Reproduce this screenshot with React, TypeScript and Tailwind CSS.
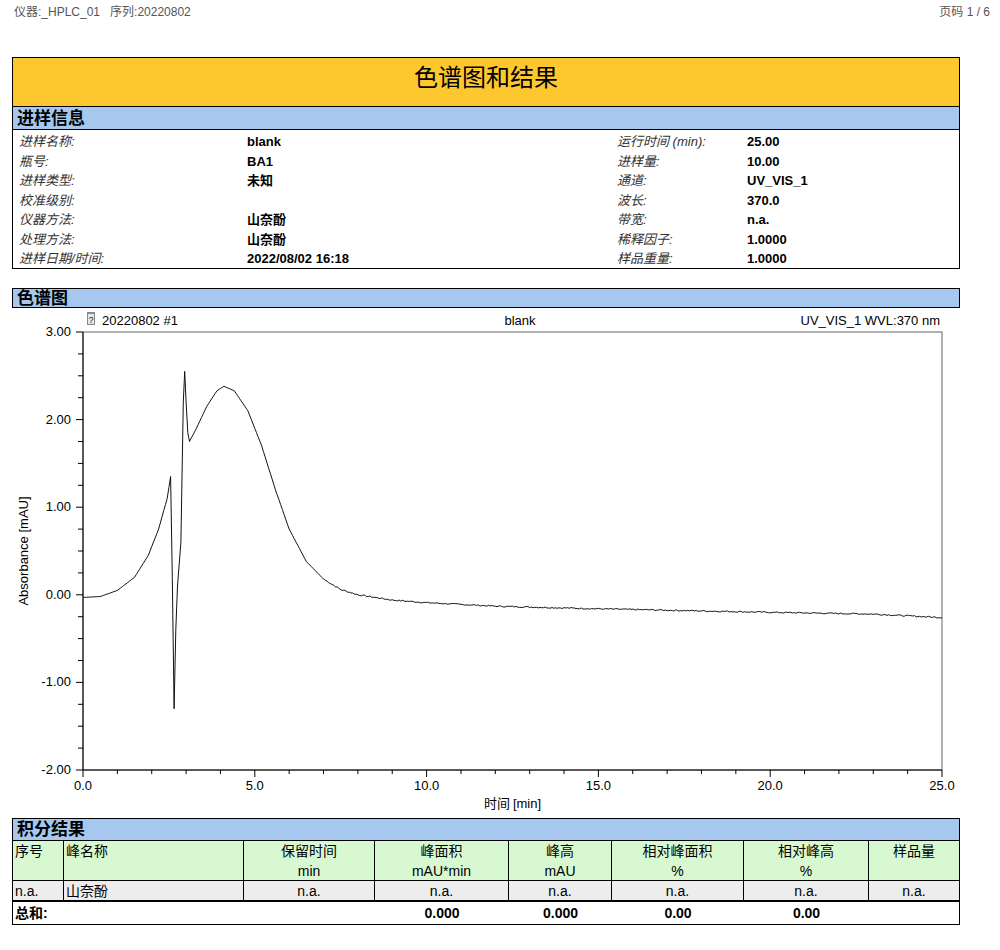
import React from "react";

const X0 = 71, PX = 34.36, YT = 24, PY = 87.6;
const mx = (t: number) => X0 + t * PX;
const my = (v: number) => YT + (3 - v) * PY;

function curvePts() {
  const key: [number, number][] = [
    [0, -0.03], [0.5, -0.02], [1.0, 0.05], [1.5, 0.2], [1.9, 0.45], [2.2, 0.75], [2.45, 1.1], [2.55, 1.35],
    [2.6, 0.2], [2.65, -1.3], [2.7, -0.4], [2.75, 0.1], [2.85, 0.6], [2.92, 2.2], [2.96, 2.55], [3.0, 2.2],
    [3.05, 1.85], [3.1, 1.75], [3.3, 1.9], [3.6, 2.15], [3.9, 2.33], [4.1, 2.38], [4.4, 2.33], [4.8, 2.1],
    [5.2, 1.7], [5.6, 1.2], [6.0, 0.75], [6.5, 0.38], [7.0, 0.18], [7.5, 0.06], [8.0, 0.0], [9.0, -0.06],
    [10, -0.09], [12, -0.13], [15, -0.16], [20, -0.2], [23, -0.22], [25, -0.26],
  ];
  const pts: string[] = [];
  let seed = 7;
  const rnd = () => { seed = (seed * 9301 + 49297) % 233280; return seed / 233280 - 0.5; };
  for (let i = 0; i < key.length - 1; i++) {
    const [t0, v0] = key[i], [t1, v1] = key[i + 1];
    const n = Math.max(1, Math.round((t1 - t0) * 20));
    for (let k = 0; k < n; k++) {
      const f = k / n;
      const t = t0 + (t1 - t0) * f;
      const v = v0 + (v1 - v0) * f + (t > 7 ? rnd() * 0.015 : 0);
      pts.push(`${mx(t).toFixed(1)},${my(v).toFixed(1)}`);
    }
  }
  pts.push(`${mx(25).toFixed(1)},${my(-0.26).toFixed(1)}`);
  return pts.join(" ");
}

const lab = "italic text-[13px] text-[#333]";
const val = "font-bold text-[13px] text-black";

function Chart() {
  const yt: JSX.Element[] = [];
  for (let i = 0; i <= 20; i++) {
    const v = 3 - i * 0.25;
    const major = i % 4 === 0;
    yt.push(<line key={"y" + i} x1={major ? X0 - 7 : X0 - 5} x2={X0} y1={my(v)} y2={my(v)} stroke="#000" strokeWidth={1} />);
    if (major) yt.push(<text key={"yl" + i} x={X0 - 12} y={my(v) + 4} fontSize={13} textAnchor="end" fill="#000">{v.toFixed(2)}</text>);
  }
  const xt: JSX.Element[] = [];
  for (let i = 0; i <= 25; i++) {
    const major = i % 5 === 0;
    xt.push(<line key={"x" + i} x1={mx(i)} x2={mx(i)} y1={my(-2)} y2={my(-2) + (major ? 7 : 4)} stroke="#000" />);
    if (major) xt.push(<text key={"xl" + i} x={mx(i)} y={my(-2) + 20} fontSize={13} textAnchor="middle">{i.toFixed(1)}</text>);
  }
  return (
    <svg width={948} height={508} className="block" style={{ fontFamily: "'Liberation Sans', sans-serif" }}>
      <rect x={75} y={4} width={8} height={13} fill="#888" />
      <rect x={76} y={6} width={6} height={10} fill="#dfe8f0" />
      <text x={79} y={15} fontSize={9} textAnchor="middle" fill="#225">?</text>
      <text x={90} y={17} fontSize={13}>20220802 #1</text>
      <text x={508} y={17} fontSize={13} textAnchor="middle">blank</text>
      <text x={928} y={17} fontSize={13} textAnchor="end">UV_VIS_1 WVL:370 nm</text>
      <rect x={X0} y={YT} width={25 * PX} height={5 * PY} fill="none" stroke="#666" />
      <line x1={X0} x2={X0} y1={YT} y2={my(-2)} stroke="#000" />
      <line x1={X0} x2={mx(25)} y1={my(-2)} y2={my(-2)} stroke="#000" />
      {yt}
      {xt}
      <polyline points={curvePts()} fill="none" stroke="#111" strokeWidth={1} />
      <text transform={`translate(16 ${my(0.5)}) rotate(-90)`} fontSize={13} textAnchor="middle">Absorbance [mAU]</text>
      <text x={mx(12.5)} y={500} fontSize={13} textAnchor="middle" style={{ fontFamily: "'Noto Sans CJK SC', sans-serif" }}>时间 <tspan style={{ fontFamily: "'Liberation Sans', sans-serif" }}>[min]</tspan></text>
    </svg>
  );
}

const left = [["进样名称:", "blank"], ["瓶号:", "BA1"], ["进样类型:", "未知"], ["校准级别:", ""], ["仪器方法:", "山奈酚"], ["处理方法:", "山奈酚"], ["进样日期/时间:", "2022/08/02 16:18"]];
const right = [["运行时间 (min):", "25.00"], ["进样量:", "10.00"], ["通道:", "UV_VIS_1"], ["波长:", "370.0"], ["带宽:", "n.a."], ["稀释因子:", "1.0000"], ["样品重量:", "1.0000"]];

const cols = ["w-[51px]", "w-[180px]", "w-[131px]", "w-[134px]", "w-[103px]", "w-[132px]", "w-[125px]", "flex-1"];

export default function App() {
  const bar = "bg-[#a6c8ee] border border-black text-[17px] font-bold leading-none px-1 flex items-center";
  return (
    <div className="w-[1000px] h-[950px] bg-white relative" style={{ fontFamily: "'Liberation Sans', 'Noto Sans CJK SC', sans-serif" }}>
      <div className="flex justify-between px-[14px] pt-[3px] text-[12px] text-[#555] h-[57px]">
        <span>仪器:_HPLC_01&nbsp;&nbsp;&nbsp;序列:20220802</span>
        <span className="mr-[-4px]">页码 1 / 6</span>
      </div>
      <div className="ml-[12px] w-[948px]">
        <div className="bg-[#fdc82f] border border-black h-[50px] flex items-start justify-center pt-[2px] text-[24px]">色谱图和结果</div>
        <div className={bar + " h-[23px] border-t-0"}>进样信息</div>
        <div className="border border-t-0 border-black h-[139px] flex pt-[2px]">
          <div className="w-[604px] flex flex-col">
            {left.map(([a, b]) => (
              <div key={a} className="flex h-[19.5px] items-center">
                <span className={lab + " w-[234px] pl-[6px]"}>{a}</span>
                <span className={val}>{b}</span>
              </div>
            ))}
          </div>
          <div className="flex-1 flex flex-col">
            {right.map(([a, b]) => (
              <div key={a} className="flex h-[19.5px] items-center">
                <span className={lab + " w-[130px]"}>{a}</span>
                <span className={val}>{b}</span>
              </div>
            ))}
          </div>
        </div>
        <div className={bar + " h-[20px] mt-[19px]"}>色谱图</div>
        <Chart />
        <div className={bar + " h-[23px] mt-[2px]"}>积分结果</div>
        <div className="border border-t-0 border-black text-[14px]" style={{ fontFamily: "'Liberation Sans Narrow', 'Liberation Sans', 'Noto Sans CJK SC', sans-serif" }}>
          <div className="flex h-[40px] bg-[#d8f8d2] border-b border-black">
            {["序号", "峰名称", "保留时间|min", "峰面积|mAU*min", "峰高|mAU", "相对峰面积|%", "相对峰高|%", "样品量"].map((h, i) => {
              const [a, b] = h.split("|");
              return (
                <div key={i} className={`${cols[i]} ${i < 7 ? "border-r border-black" : ""} flex flex-col ${i < 2 ? "items-start pl-[2px]" : "items-center"} leading-[20px]`}>
                  <span>{a}</span>
                  {b && <span>{b}</span>}
                </div>
              );
            })}
          </div>
          <div className="flex h-[21px] bg-[#ededed] border-b-2 border-black leading-[20px]">
            {["n.a.", "山奈酚", "n.a.", "n.a.", "n.a.", "n.a.", "n.a.", "n.a."].map((c, i) => (
              <div key={i} className={`${cols[i]} ${i < 7 ? "border-r border-black" : ""} ${i < 2 ? "pl-[2px]" : "text-center"}`}>{c}</div>
            ))}
          </div>
          <div className="flex h-[22px] items-center font-bold">
            {["总和:", "", "", "0.000", "0.000", "0.00", "0.00", ""].map((c, i) => (
              <div key={i} className={`${cols[i]} ${i < 2 ? "pl-[2px]" : "text-center"}`}>{c}</div>
            ))}
          </div>
        </div>
      </div>
    </div>
  );
}
